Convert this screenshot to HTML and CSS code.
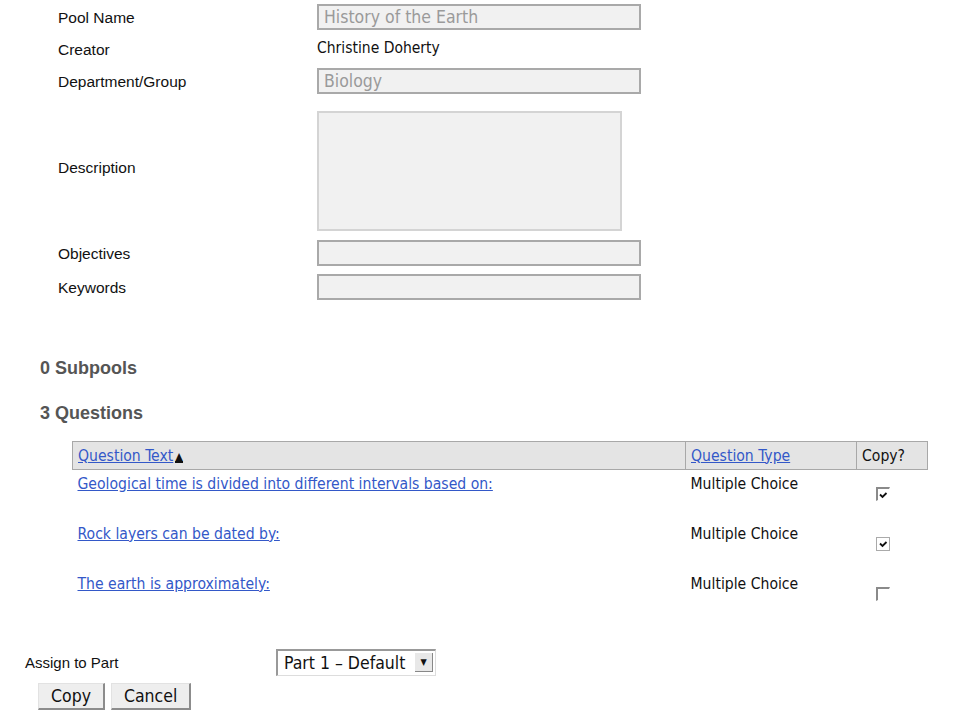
FILE: index.html
```html
<!DOCTYPE html>
<html lang="en">
<head>
    <meta charset="UTF-8">
    <title>Question Pool</title>
    <link rel="stylesheet" href="styles.css">
</head>
<body>
    <div class="page">
        <!-- Pool details -->
        <div class="pool-form">
            <label class="field-label">Pool Name</label>
            <div><input class="text-input" type="text" value="History of the Earth" disabled></div>

            <label class="field-label">Creator</label>
            <div class="field-value">Christine Doherty</div>

            <label class="field-label">Department/Group</label>
            <div><input class="text-input" type="text" value="Biology" disabled></div>

            <label class="field-label">Description</label>
            <div><textarea class="text-area" disabled></textarea></div>

            <label class="field-label">Objectives</label>
            <div><input class="text-input" type="text" disabled></div>

            <label class="field-label">Keywords</label>
            <div><input class="text-input" type="text" disabled></div>
        </div>

        <h2 class="section-title subpools">0 Subpools</h2>
        <h2 class="section-title">3 Questions</h2>

        <!-- Questions -->
        <table class="questions">
            <thead>
                <tr>
                    <th class="col-text"><a href="#">Question Text</a><span class="sort-icon">&#9650;</span></th>
                    <th class="col-type"><a href="#">Question Type</a></th>
                    <th class="col-copy">Copy?</th>
                </tr>
            </thead>
            <tbody>
                <tr>
                    <td><a href="#">Geological time is divided into different intervals based on:</a></td>
                    <td class="type">Multiple Choice</td>
                    <td class="copy"><input type="checkbox" class="copy-check open" checked></td>
                </tr>
                <tr>
                    <td><a href="#">Rock layers can be dated by:</a></td>
                    <td class="type">Multiple Choice</td>
                    <td class="copy"><input type="checkbox" class="copy-check" checked></td>
                </tr>
                <tr>
                    <td><a href="#">The earth is approximately:</a></td>
                    <td class="type">Multiple Choice</td>
                    <td class="copy"><input type="checkbox" class="copy-check open"></td>
                </tr>
            </tbody>
        </table>

        <!-- Part assignment and actions -->
        <div class="assign-row">
            <span class="assign-label">Assign to Part</span>
            <div class="part-select">
                <span>Part 1 &ndash; Default</span>
                <span class="select-arrow">&#9660;</span>
            </div>
        </div>
        <div class="actions">
            <button class="btn">Copy</button>
            <button class="btn">Cancel</button>
        </div>
    </div>
</body>
</html>
```

FILE: styles.css
```css
/* Global Styles */
body {
    margin: 0;
    background: #ffffff;
    color: #111;
    font-family: 'Liberation Sans', Arial, sans-serif;
}

.page {
    padding-top: 4px;
}

/* Pool details form */
.pool-form {
    display: grid;
    grid-template-columns: 259px 1fr;
    row-gap: 8px;
    align-items: center;
    padding-left: 58px;
}

.field-label {
    font-size: 15.5px;
    padding-top: 2px;
}

.field-value {
    font-family: 'DejaVu Sans Condensed', 'DejaVu Sans', sans-serif;
    font-size: 15.5px;
    height: 22px;
    line-height: 20px;
}

.text-input {
    box-sizing: border-box;
    width: 324px;
    height: 26px;
    margin: 0;
    padding: 0 5px;
    border: 2px solid #a9a9a9;
    background: #f1f1f1;
    color: #9a9a9a;
    font-family: 'DejaVu Sans Condensed', 'DejaVu Sans', sans-serif;
    font-size: 17.5px;
    display: block;
}

.text-area {
    box-sizing: border-box;
    width: 305px;
    height: 120px;
    margin: 9px 0 1px;
    border: 2px solid #d4d4d4;
    background: #f1f1f1;
    resize: none;
    display: block;
}

/* Section headings */
.section-title {
    font-size: 18px;
    font-weight: bold;
    color: #555;
    margin: 0 0 0 40px;
}

.subpools {
    margin-top: 58px;
    margin-bottom: 24px;
}

/* Questions table */
.questions {
    margin: 17px 0 0 72px;
    width: 856px;
    border-collapse: collapse;
    font-family: 'DejaVu Sans Condensed', 'DejaVu Sans', sans-serif;
    font-size: 15.6px;
}

.questions a {
    color: #3358c8;
}

.questions th {
    background: #e4e4e4;
    border: 1px solid #a8a8a8;
    text-align: left;
    font-weight: normal;
    height: 27px;
    padding: 0 5px;
}

.col-text { width: 602px; }
.col-type { width: 160px; }

.sort-icon {
    display: inline-block;
    font-size: 11px;
    line-height: 9px;
    border-bottom: 2px solid #111;
    vertical-align: 1px;
    margin-left: 2px;
}

.questions tbody tr {
    height: 50px;
}

.questions td {
    vertical-align: top;
    padding: 5px 5px 0;
}

.questions td.copy {
    padding: 17px 0 0 19px;
}

.copy-check {
    appearance: none;
    -webkit-appearance: none;
    width: 14px;
    height: 14px;
    margin: 0;
    display: block;
    background: #fff;
    border: 1px solid #ccc;
    border-top: 2px solid #8a8a8a;
    border-left: 2px solid #8a8a8a;
    box-sizing: border-box;
}

.copy-check:not(.open) {
    border: 1px solid #aaa;
}

.copy-check.open {
    border-right-color: transparent;
    border-bottom-color: transparent;
}

.copy-check:checked {
    background-image: url("data:image/svg+xml,%3Csvg xmlns='http://www.w3.org/2000/svg' viewBox='0 0 12 12'%3E%3Cpath d='M3 5.5l2.5 2.5 4-4' fill='none' stroke='%23111' stroke-width='1.8'/%3E%3C/svg%3E");
    background-size: 12px 12px;
    background-position: center;
    background-repeat: no-repeat;
}

/* Assign row */
.assign-row {
    display: flex;
    align-items: center;
    margin-top: 29px;
    padding-left: 25px;
}

.assign-label {
    width: 251px;
    font-size: 15px;
}

.part-select {
    box-sizing: border-box;
    width: 160px;
    height: 27px;
    display: flex;
    align-items: center;
    justify-content: space-between;
    padding: 0 2px 0 6px;
    border: 1px solid #ddd;
    border-top: 2px solid #999;
    border-left: 2px solid #999;
    font-family: 'DejaVu Sans Condensed', 'DejaVu Sans', sans-serif;
    font-size: 17.5px;
}

.select-arrow {
    width: 17px;
    height: 18px;
    background: #e8e8e8;
    border-right: 1px solid #888;
    border-bottom: 1px solid #888;
    font-size: 9px;
    text-align: center;
    line-height: 18px;
}

/* Buttons */
.actions {
    display: flex;
    gap: 6px;
    padding-left: 38px;
    margin-top: 7px;
}

.btn {
    box-sizing: border-box;
    height: 27px;
    padding: 0 12px;
    background: #eeeeee;
    border: 1px solid #e2e2e2;
    border-right: 2px solid #8c8c8c;
    border-bottom: 2px solid #8c8c8c;
    border-radius: 0;
    font-family: 'DejaVu Sans Condensed', 'DejaVu Sans', sans-serif;
    font-size: 17.5px;
    color: #111;
}
```
